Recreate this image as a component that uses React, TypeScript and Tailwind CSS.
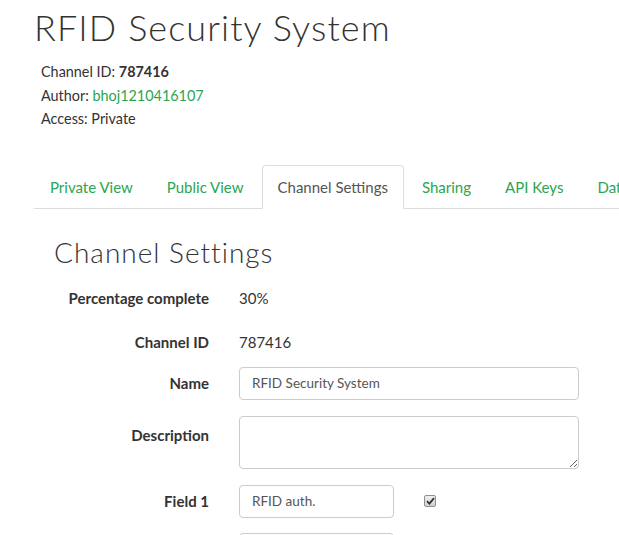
import React from 'react';

const tabs = ['Private View', 'Public View', 'Channel Settings', 'Sharing', 'API Keys', 'Data Import / Export'];

function Row({ label, children, className = '' }: { label: string; children: React.ReactNode; className?: string }) {
  return (
    <div className={`flex ${className}`}>
      <div className="w-[155px] shrink-0 text-right font-bold text-[#333]">{label}</div>
      <div className="ml-[30px] flex-1">{children}</div>
    </div>
  );
}

export default function App() {
  return (
    <div className="h-[535px] w-[619px] overflow-hidden bg-white text-[15px] text-[#333]" style={{ fontFamily: 'Lato, "Liberation Sans", sans-serif' }}>
      <div className="pl-[34px]">
        <h1 className="pt-[7px] text-[36px] font-light leading-[40px] tracking-[1.1px] text-[#333]">RFID Security System</h1>

        <div className="mt-[13px] pl-[7px] text-[14.4px] leading-[23.5px]">
          <p>Channel ID: <span className="font-bold">787416</span></p>
          <p>Author: <span className="text-[#2aa552]">bhoj1210416107</span></p>
          <p>Access: Private</p>
        </div>

        {/* Tabs */}
        <div className="mt-[34px] flex w-[700px] border-b border-[#ddd] whitespace-nowrap">
          {tabs.map((t) => {
            const active = t === 'Channel Settings';
            return (
              <div
                key={t}
                className={`mr-[2px] -mb-px px-[15px] py-[10px] leading-[22px] ${
                  active
                    ? 'rounded-t-[4px] border border-[#ddd] border-b-white bg-white text-[#555]'
                    : 'border border-transparent text-[#2aa552]'
                }`}
              >
                {t}
              </div>
            );
          })}
        </div>

        {/* Settings */}
        <div className="pl-[20px]">
          <h2 className="mt-[25px] text-[28px] font-light leading-[36px] tracking-[1px]">Channel Settings</h2>

          <div className="mt-[17px]">
            <Row label="Percentage complete" className="leading-[22px]">30%</Row>
            <Row label="Channel ID" className="mt-[22px] leading-[22px]">787416</Row>

            <Row label="Name" className="mt-[14px] items-center">
              <div className="flex h-[33px] w-[340px] items-center rounded-[4px] border border-[#ccc] px-[12px] text-[13.5px] text-[#555]">
                RFID Security System
              </div>
            </Row>

            <Row label="Description" className="mt-[16px] [&>div:first-child]:pt-[8px]">
              <textarea className="block h-[53px] w-[340px] rounded-[4px] border border-[#ccc] px-[12px] py-[6px] text-[14px] outline-none" />
            </Row>

            <Row label="Field 1" className="mt-[16px] items-center">
              <div className="flex items-center">
                <div className="flex h-[33px] w-[155px] items-center rounded-[4px] border border-[#ccc] px-[12px] text-[13.5px] text-[#555]">
                  RFID auth.
                </div>
                <span className="ml-[30px] flex h-[12px] w-[12px] items-center justify-center rounded-[2px] border border-[#8f8f8f] bg-gradient-to-b from-[#f0f0f0] to-[#cfcfcf]">
                  <svg width="9" height="8" viewBox="0 0 9 8">
                    <path d="M1 4.2 L3.4 6.6 L8 1.2" fill="none" stroke="#333" strokeWidth="1.8" />
                  </svg>
                </span>
              </div>
            </Row>

            <Row label="" className="mt-[15px]">
              <div className="h-[33px] w-[155px] rounded-[4px] border border-[#ccc]" />
            </Row>
          </div>
        </div>
      </div>
    </div>
  );
}
